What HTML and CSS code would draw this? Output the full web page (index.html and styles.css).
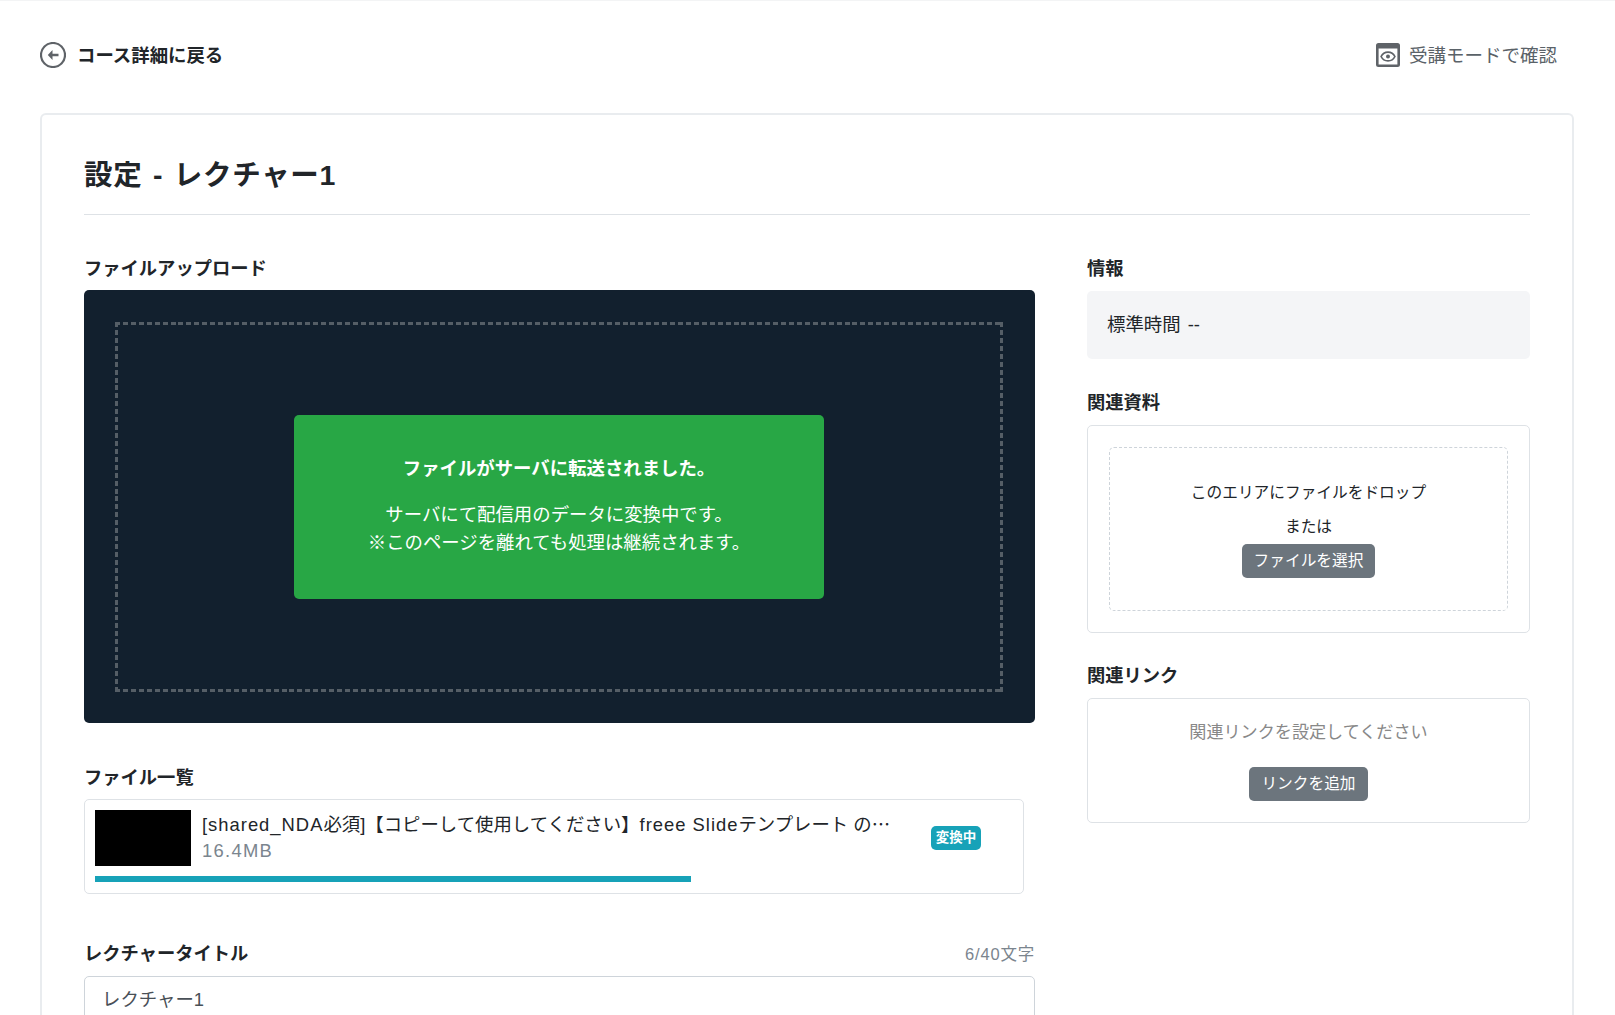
FILE: index.html
```html
<!DOCTYPE HTML>
<html lang="ja">
<head>
    <title>設定 - レクチャー1</title>
    <meta charset="UTF-8">
    <meta name="viewport" content="width=device-width, initial-scale=1"/>
    <link rel="stylesheet" href="styles.css">
</head>
<body>
<header class="topbar">
    <a class="back-link">
        <svg class="icon-back" viewBox="0 0 26 26">
            <circle cx="13" cy="13" r="12" fill="none" stroke="#5f6368" stroke-width="2.2"/>
            <path d="M18.500 11.700H12.500V8L7.800 13l4.700 5v-3.700h6z" fill="#5f6368"/>
        </svg>
        <span>コース詳細に戻る</span>
    </a>
    <a class="preview-link">
        <svg class="icon-preview" viewBox="0 0 24 24">
            <path fill="#5f6368" fill-rule="evenodd" d="M2.5 0h19A2.5 2.5 0 0 1 24 2.500v19a2.500 2.500 0 0 1-2.500 2.500h-19A2.500 2.500 0 0 1 0 21.500v-19A2.500 2.500 0 0 1 2.500 0zM2.600 5.500v15.900h18.800V5.500z"/>
            <path d="M5.100 13.500C6.500 10.600 9 9.100 12 9.100s5.500 1.500 6.900 4.400c-1.400 2.900-3.900 4.400-6.900 4.400s-5.500-1.500-6.900-4.400z" fill="none" stroke="#5f6368" stroke-width="1.700"/>
            <circle cx="12" cy="13.500" r="2" fill="#5f6368"/>
        </svg>
        <span>受講モードで確認</span>
    </a>
</header>

<main class="card">
    <h1 class="page-title">設定 - レクチャー1</h1>
    <div class="columns">
        <section class="main-column">
            <h2 class="label">ファイルアップロード</h2>
            <div class="upload">
                <div class="upload-frame">
                    <div class="upload-message">
                        <p><strong>ファイルがサーバに転送されました。</strong></p>
                        <p>サーバにて配信用のデータに変換中です。<br>※このページを離れても処理は継続されます。</p>
                    </div>
                </div>
            </div>

            <h2 class="label">ファイル一覧</h2>
            <div class="file">
                <div class="file-row">
                    <div class="file-thumb"></div>
                    <div class="file-info">
                        <div class="file-name"><span class="latin">[shared_NDA</span>必須]【コピーして使用してください】<span class="latin">freee Slide</span>テンプレート の<span class="dots">…</span></div>
                        <div class="file-size">16.4MB</div>
                    </div>
                    <span class="badge">変換中</span>
                </div>
                <div class="progress"><div class="progress-bar" style="width: 67%"></div></div>
            </div>

            <div class="label-row">
                <h2 class="label">レクチャータイトル</h2>
                <span class="counter">6/40文字</span>
            </div>
            <div class="input">レクチャー1</div>
        </section>

        <aside class="side-column">
            <h2 class="label">情報</h2>
            <div class="info">標準時間 --</div>

            <h2 class="label">関連資料</h2>
            <div class="panel">
                <div class="drop">
                    <p>このエリアにファイルをドロップ</p>
                    <p>または</p>
                    <span class="btn">ファイルを選択</span>
                </div>
            </div>

            <h2 class="label">関連リンク</h2>
            <div class="panel links">
                <p>関連リンクを設定してください</p>
                <span class="btn">リンクを追加</span>
            </div>
        </aside>
    </div>
</main>
</body>
</html>
```
FILE: styles.css
```css
* {
    box-sizing: border-box;
}

html, body {
    height: 100%;
    overflow: hidden;
}

body {
    margin: 0;
    background: #fff;
    color: #212529;
    border-top: 1px solid #f3f4f5;
    font-family: "Liberation Sans", "Noto Sans CJK JP", sans-serif;
    font-size: 18.4px;
    line-height: 28px;
}

h1, h2, p {
    margin: 0;
}

.topbar {
    display: flex;
    justify-content: space-between;
    align-items: center;
    height: 112px;
    padding: 0 58px 4px 40px;
}

.back-link, .preview-link {
    display: flex;
    align-items: center;
}

.back-link span, .preview-link span {
    padding-top: 2px;
}

.back-link {
    gap: 11px;
    font-weight: bold;
}

.preview-link {
    gap: 9px;
    color: #5a6268;
    font-size: 18.5px;
}

.icon-back {
    width: 26px;
    height: 26px;
}

.icon-preview {
    width: 24px;
    height: 24px;
}

.card {
    display: flex;
    flex-direction: column;
    margin: 0 41px 0 40px;
    height: 902px;
    padding: 42px 42px 0;
    border: 2px solid #e9ecef;
    border-bottom: 0;
    border-radius: 6px 6px 0 0;
}

.page-title {
    flex: none;
    height: 58px;
    padding-top: 1px;
    border-bottom: 1px solid #dee2e6;
    font-size: 28.5px;
    letter-spacing: 0.7px;
    line-height: 34px;
    word-spacing: 2px;
}

.columns {
    display: flex;
    justify-content: space-between;
    padding-top: 40px;
}

.main-column {
    width: 951px;
}

.side-column {
    width: 443px;
}

.label {
    margin-bottom: 8px;
    font-size: 18.3px;
    line-height: 28px;
}

.main-column .label {
    margin-bottom: 7px;
}

.upload {
    height: 433px;
    margin-bottom: 41px;
    padding: 32px 32px 31px 31px;
    background: #12202e;
    border-radius: 5px;
}

/* dashed frame, 5px dash and 3px gap */
.upload-frame {
    display: flex;
    justify-content: center;
    align-items: center;
    height: 100%;
    background:
        repeating-linear-gradient(90deg, #555e66 0 5px, transparent 5px 7.93px) top / 100% 3px no-repeat,
        repeating-linear-gradient(90deg, #555e66 0 5px, transparent 5px 7.93px) bottom / 100% 3px no-repeat,
        repeating-linear-gradient(#555e66 0 5px, transparent 5px 7.93px) left / 3px 100% no-repeat,
        repeating-linear-gradient(#555e66 0 5px, transparent 5px 7.93px) right / 3px 100% no-repeat;
}

.upload-message {
    width: 530px;
    height: 184px;
    padding-top: 40px;
    background: #28a745;
    border-radius: 5px;
    color: #fff;
    text-align: center;
}

.upload-message p {
    margin-bottom: 18px;
}

.file {
    width: 940px;
    height: 95px;
    margin-bottom: 46px;
    padding: 10px;
    border: 1px solid #dee2e6;
    border-radius: 5px;
}

.file-row {
    display: flex;
    height: 56px;
}

.file-thumb {
    width: 96px;
    background: #000;
}

.file-info {
    width: 740px;
    padding-left: 11px;
    line-height: 26px;
}

.file-name {
    white-space: nowrap;
}

.latin {
    letter-spacing: 1px;
}

.dots {
    font-family: "Noto Sans CJK JP", sans-serif;
}

.file-size {
    color: #7b858e;
    letter-spacing: 1.3px;
}

.badge {
    align-self: center;
    width: 50px;
    height: 24px;
    background: #17a2b8;
    border-radius: 5px;
    color: #fff;
    font-size: 13.5px;
    font-weight: bold;
    line-height: 24px;
    text-align: center;
}

.progress {
    height: 6px;
    margin-top: 10px;
    width: 890px;
}

.progress-bar {
    height: 6px;
    background: #17a2b8;
}

.label-row {
    display: flex;
    justify-content: space-between;
}

.counter {
    color: #7b858e;
    font-size: 16.5px;
    letter-spacing: 0.8px;
}

.input {
    height: 48px;
    margin-top: 1px;
    padding: 9px 17px;
    border: 1px solid #ced4da;
    border-radius: 5px;
    color: #495057;
}

.info {
    height: 68px;
    margin-bottom: 30px;
    padding: 20px 20px;
    background: #f4f5f7;
    border-radius: 5px;
    word-spacing: 2px;
}

.panel {
    height: 208px;
    margin-bottom: 29px;
    padding: 21px;
    border: 1px solid #dee2e6;
    border-radius: 5px;
}

.drop {
    height: 164px;
    padding-top: 28px;
    border: 1px dashed #ced4da;
    border-radius: 5px;
    text-align: center;
    font-size: 15.7px;
    line-height: 34px;
}

.btn {
    display: inline-block;
    height: 34px;
    padding: 0 12px;
    background: #6c757d;
    border-radius: 5px;
    color: #fff;
    font-size: 15.7px;
    line-height: 34px;
}

.links {
    height: 125px;
    padding-top: 20px;
    text-align: center;
}

.links p {
    margin-bottom: 20px;
    color: #888;
    font-size: 17.1px;
}
```
